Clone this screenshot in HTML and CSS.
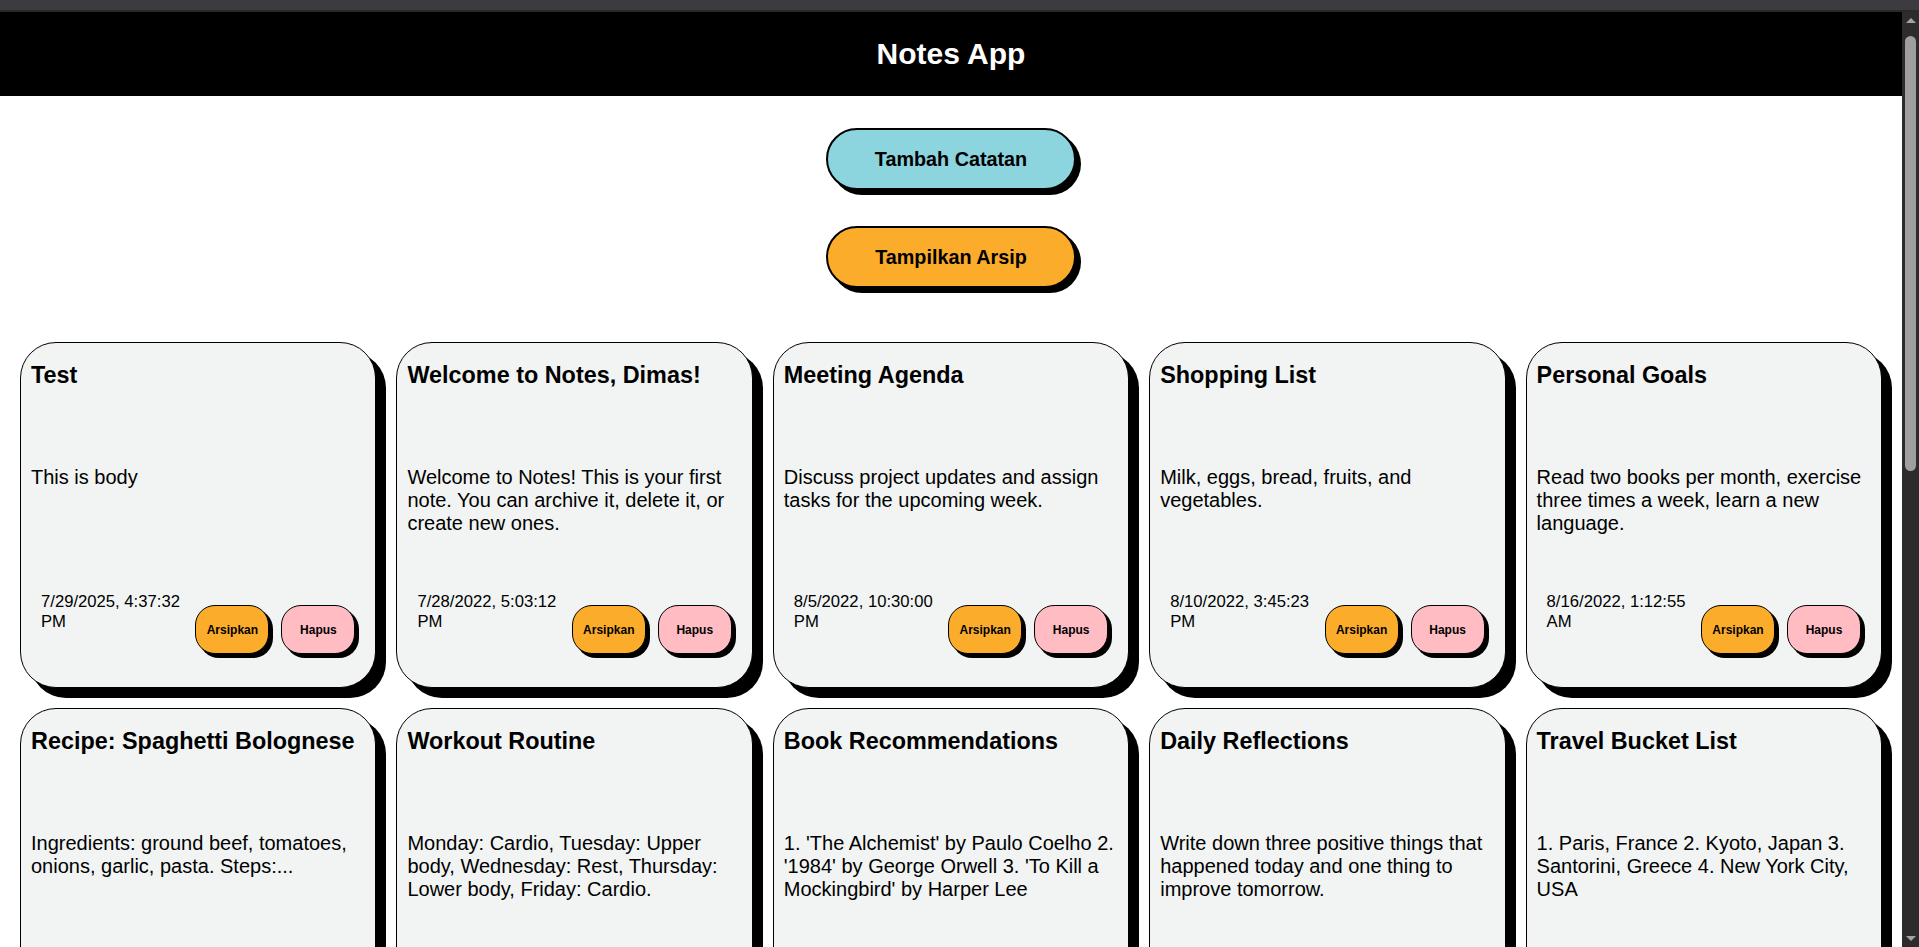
FILE: index.html
```html
<!DOCTYPE html>
<html lang="id">
<head>
<meta charset="utf-8">
<title>Notes App</title>
<link rel="stylesheet" href="styles.css">
</head>
<body>
<div class="chrome"></div>
<div class="window">
  <div class="viewport">
    <header class="app-header">
      <h1 class="app-title">Notes App</h1>
    </header>
    <div class="actions">
      <button class="btn-main btn-add">Tambah Catatan</button>
      <button class="btn-main btn-archive">Tampilkan Arsip</button>
    </div>
    <main class="grid">
      <article class="card">
        <h3 class="card-title">Test</h3>
        <p class="card-body">This is body</p>
        <div class="card-footer">
          <span class="card-date">7/29/2025, 4:37:32 PM</span>
          <div class="card-actions"><button class="btn-small btn-arsip">Arsipkan</button><button class="btn-small btn-hapus">Hapus</button></div>
        </div>
      </article>
      <article class="card">
        <h3 class="card-title">Welcome to Notes, Dimas!</h3>
        <p class="card-body">Welcome to Notes! This is your first note. You can archive it, delete it, or create new ones.</p>
        <div class="card-footer">
          <span class="card-date">7/28/2022, 5:03:12 PM</span>
          <div class="card-actions"><button class="btn-small btn-arsip">Arsipkan</button><button class="btn-small btn-hapus">Hapus</button></div>
        </div>
      </article>
      <article class="card">
        <h3 class="card-title">Meeting Agenda</h3>
        <p class="card-body">Discuss project updates and assign tasks for the upcoming week.</p>
        <div class="card-footer">
          <span class="card-date">8/5/2022, 10:30:00 PM</span>
          <div class="card-actions"><button class="btn-small btn-arsip">Arsipkan</button><button class="btn-small btn-hapus">Hapus</button></div>
        </div>
      </article>
      <article class="card">
        <h3 class="card-title">Shopping List</h3>
        <p class="card-body">Milk, eggs, bread, fruits, and vegetables.</p>
        <div class="card-footer">
          <span class="card-date">8/10/2022, 3:45:23 PM</span>
          <div class="card-actions"><button class="btn-small btn-arsip">Arsipkan</button><button class="btn-small btn-hapus">Hapus</button></div>
        </div>
      </article>
      <article class="card">
        <h3 class="card-title">Personal Goals</h3>
        <p class="card-body">Read two books per month, exercise three times a week, learn a new language.</p>
        <div class="card-footer">
          <span class="card-date">8/16/2022, 1:12:55 AM</span>
          <div class="card-actions"><button class="btn-small btn-arsip">Arsipkan</button><button class="btn-small btn-hapus">Hapus</button></div>
        </div>
      </article>
      <article class="card">
        <h3 class="card-title">Recipe: Spaghetti Bolognese</h3>
        <p class="card-body">Ingredients: ground beef, tomatoes, onions, garlic, pasta. Steps:...</p>
      </article>
      <article class="card">
        <h3 class="card-title">Workout Routine</h3>
        <p class="card-body">Monday: Cardio, Tuesday: Upper body, Wednesday: Rest, Thursday: Lower body, Friday: Cardio.</p>
      </article>
      <article class="card">
        <h3 class="card-title">Book Recommendations</h3>
        <p class="card-body">1. 'The Alchemist' by Paulo Coelho 2. '1984' by George Orwell 3. 'To Kill a Mockingbird' by Harper Lee</p>
      </article>
      <article class="card">
        <h3 class="card-title">Daily Reflections</h3>
        <p class="card-body">Write down three positive things that happened today and one thing to improve tomorrow.</p>
      </article>
      <article class="card">
        <h3 class="card-title">Travel Bucket List</h3>
        <p class="card-body">1. Paris, France 2. Kyoto, Japan 3. Santorini, Greece 4. New York City, USA</p>
      </article>
    </main>
  </div>
  <div class="scrollbar" aria-hidden="true">
    <div class="scroll-arrow"><span class="arrow-up"></span></div>
    <div class="scroll-track"><div class="scroll-thumb"></div></div>
    <div class="scroll-arrow"><span class="arrow-down"></span></div>
  </div>
</div>
</body>
</html>
```

FILE: styles.css
```css
html, body {
  margin: 0;
  padding: 0;
  height: 100%;
  overflow: hidden;
  background: #ffffff;
}

body {
  font-family: "Liberation Sans", Arial, sans-serif;
  color: #000;
}

.chrome {
  height: 10px;
  background: #3c3b40;
  border-bottom: 2px solid #2a292e;
}

.window {
  display: flex;
  height: 935px;
}

.viewport {
  flex: 1;
  min-width: 0;
  overflow: hidden;
  background: #fff;
}

.scrollbar {
  width: 17px;
  flex: none;
  background: #2c2c2c;
  display: flex;
  flex-direction: column;
}

.scroll-arrow {
  height: 17px;
  display: flex;
  align-items: center;
  justify-content: center;
}

.arrow-up {
  width: 0;
  height: 0;
  border-left: 5px solid transparent;
  border-right: 5px solid transparent;
  border-bottom: 5px solid #a3a3a3;
}

.arrow-down {
  width: 0;
  height: 0;
  border-left: 5px solid transparent;
  border-right: 5px solid transparent;
  border-top: 5px solid #a3a3a3;
}

.scroll-track {
  flex: 1;
  padding-top: 7px;
}

.scroll-thumb {
  width: 11px;
  height: 435px;
  margin: 0 auto;
  border-radius: 6px;
  background: #9f9f9f;
}

.app-header {
  height: 84px;
  background: #000;
  display: flex;
  align-items: center;
  justify-content: center;
}

.app-title {
  margin: 0;
  color: #fff;
  font-size: 30px;
  font-weight: bold;
}

.actions {
  display: flex;
  flex-direction: column;
  align-items: center;
  gap: 36px;
  padding-top: 32px;
}

.btn-main {
  width: 250px;
  height: 62px;
  border: 2px solid #000;
  border-radius: 31px;
  box-shadow: 5px 5px 0 #000;
  font-family: "Liberation Sans", Arial, sans-serif;
  font-size: 19.8px;
  font-weight: bold;
  color: #000;
  cursor: pointer;
}

.btn-add {
  background: #8cd4de;
}

.btn-archive {
  background: #fbac2b;
}

.grid {
  display: grid;
  grid-template-columns: repeat(5, 1fr);
  gap: 20px;
  padding: 0 20px 40px;
  margin-top: 54px;
}

.card {
  box-sizing: border-box;
  height: 346px;
  border: 1px solid #000;
  border-radius: 36px;
  background: #f1f4f3;
  box-shadow: 10px 10px 0 #000;
  padding: 10px;
  display: flex;
  flex-direction: column;
}

.card-title {
  margin: 9px 0 0;
  font-size: 23.4px;
  font-weight: bold;
  line-height: normal;
}

.card-body {
  margin: 77px 0 0;
  font-size: 20px;
  line-height: normal;
}

.card-footer {
  margin-top: auto;
  margin-bottom: 23px;
  display: flex;
  align-items: flex-start;
}

.card-date {
  flex: 1;
  padding: 0 10px;
  font-size: 16.67px;
  line-height: normal;
}

.card-actions {
  display: flex;
  gap: 12px;
  margin-top: 13px;
  margin-right: 10px;
}

.btn-small {
  width: 74px;
  height: 49px;
  border: 1px solid #000;
  border-radius: 20px;
  box-shadow: 4px 4px 0 #000;
  font-family: "Liberation Sans", Arial, sans-serif;
  font-size: 12px;
  font-weight: bold;
  color: #000;
  padding: 0;
  cursor: pointer;
}

.btn-arsip {
  background: #fbac2b;
}

.btn-hapus {
  background: #ffbcc3;
}
```
